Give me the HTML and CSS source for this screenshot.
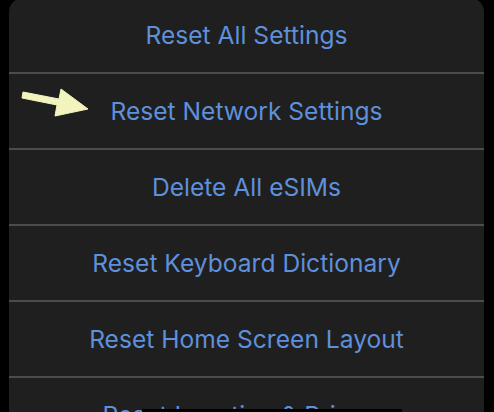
FILE: index.html
```html
<!DOCTYPE html>
<html>
<head>
<meta charset="utf-8">
<link rel="stylesheet" href="styles.css">
</head>
<body>
<div class="screen">
  <div class="card">
    <div class="row">Reset All Settings</div>
    <div class="row">
      <svg class="arrow" width="100" height="74" viewBox="0 0 100 74">
        <path d="M23 18 L59 25 L61 15 L88 35 L55 42 L57 31 L22 24 Z" fill="#f2f3bd" stroke="#f2f3bd" stroke-width="1" stroke-linejoin="round"/>
      </svg>
      Reset Network Settings
    </div>
    <div class="row">Delete All eSIMs</div>
    <div class="row">Reset Keyboard Dictionary</div>
    <div class="row">Reset Home Screen Layout</div>
    <div class="row">Reset Location &amp; Privacy</div>
  </div>
  <div class="strip"></div>
</div>
</body>
</html>
```
FILE: styles.css
```css
html, body {
  margin: 0;
  padding: 0;
  background: #000;
}
.screen {
  position: relative;
  width: 494px;
  height: 412px;
  overflow: hidden;
  background: #000;
}
.card {
  margin: -2px 10px 0 9px;
  background: #1f1f1f;
  border-radius: 14px 14px 0 0;
  display: flex;
  flex-direction: column;
}
.row {
  position: relative;
  height: 74px;
  flex: none;
  display: flex;
  align-items: center;
  justify-content: center;
  color: #5e90db;
  font-family: Inter, "Liberation Sans", sans-serif;
  font-size: 24.6px;
  border-bottom: 2px solid #4c4c4c;
}
.row:first-child {
  height: 74px;
}
.arrow {
  position: absolute;
  left: -9px;
  top: 0;
}
.strip {
  position: absolute;
  left: 142px;
  top: 409px;
  width: 260px;
  height: 3px;
  background: #000;
}
```
